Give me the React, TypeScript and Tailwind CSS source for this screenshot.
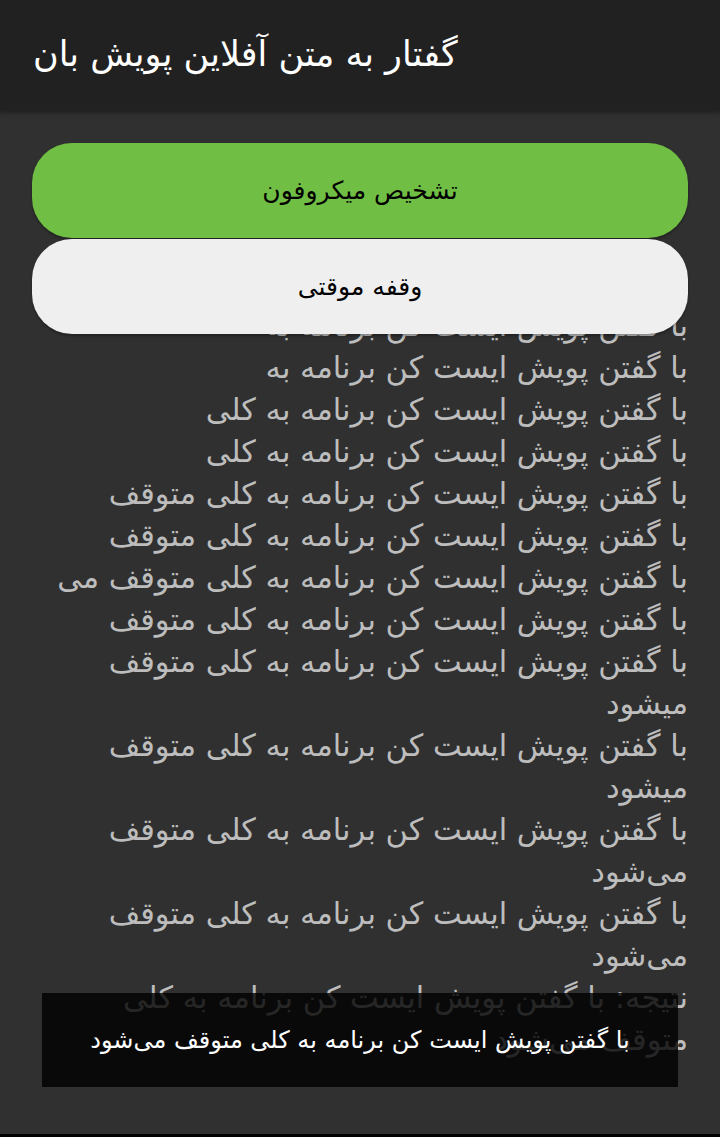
import React from "react";

const lines = [
  "با گفتن پویش ایست کن برنامه به",
  "با گفتن پویش ایست کن برنامه به",
  "با گفتن پویش ایست کن برنامه به کلی",
  "با گفتن پویش ایست کن برنامه به کلی",
  "با گفتن پویش ایست کن برنامه به کلی متوقف",
  "با گفتن پویش ایست کن برنامه به کلی متوقف",
  "با گفتن پویش ایست کن برنامه به کلی متوقف می",
  "با گفتن پویش ایست کن برنامه به کلی متوقف",
  "با گفتن پویش ایست کن برنامه به کلی متوقف",
  "میشود",
  "با گفتن پویش ایست کن برنامه به کلی متوقف",
  "میشود",
  "با گفتن پویش ایست کن برنامه به کلی متوقف",
  "می‌شود",
  "با گفتن پویش ایست کن برنامه به کلی متوقف",
  "می‌شود",
  "نتیجه: با گفتن پویش ایست کن برنامه به کلی",
  "متوقف می‌شود",
];

export default function App() {
  return (
    <div
      className="w-[720px] h-[1137px] bg-[#303030] flex flex-col overflow-hidden relative"
      style={{ fontFamily: '"DejaVu Sans", sans-serif' }}
    >
      <header className="h-[111px] shrink-0 bg-[#212121] flex items-center px-[33px] shadow-[0_2px_4px_rgba(0,0,0,0.35)] z-20">
        <h1 className="text-[35px] text-white leading-none pb-[2px]">گفتار به متن آفلاین پویش بان</h1>
      </header>
      <main className="flex-1 flex flex-col px-[32px] pt-[32px]">
        <div className="flex flex-col gap-[1px] relative z-10">
          <button className="h-[95px] rounded-[40px] bg-[#70bf44] text-black text-[25px] shadow-[0_2px_3px_rgba(0,0,0,0.3)]">
            تشخیص میکروفون
          </button>
          <button className="h-[95px] rounded-[40px] bg-[#efefef] text-black text-[25px] shadow-[0_2px_3px_rgba(0,0,0,0.3)]">
            وقفه موقتی
          </button>
        </div>
        <div dir="rtl" className="mt-[-29px] text-right text-[#bdbdbd] text-[30.5px] leading-[42px] whitespace-nowrap">
          {lines.map((l, i) => (
            <div key={i}>{l}</div>
          ))}
        </div>
      </main>
      <div className="absolute left-[42px] top-[993px] w-[636px] h-[94px] bg-[rgba(0,0,0,0.8)] z-30 flex items-center justify-center">
        <span dir="rtl" className="text-white text-[24px]">با گفتن پویش ایست کن برنامه به کلی متوقف می‌شود</span>
      </div>
      <div className="absolute left-0 bottom-0 w-full h-[3px] bg-black z-30" />
    </div>
  );
}
